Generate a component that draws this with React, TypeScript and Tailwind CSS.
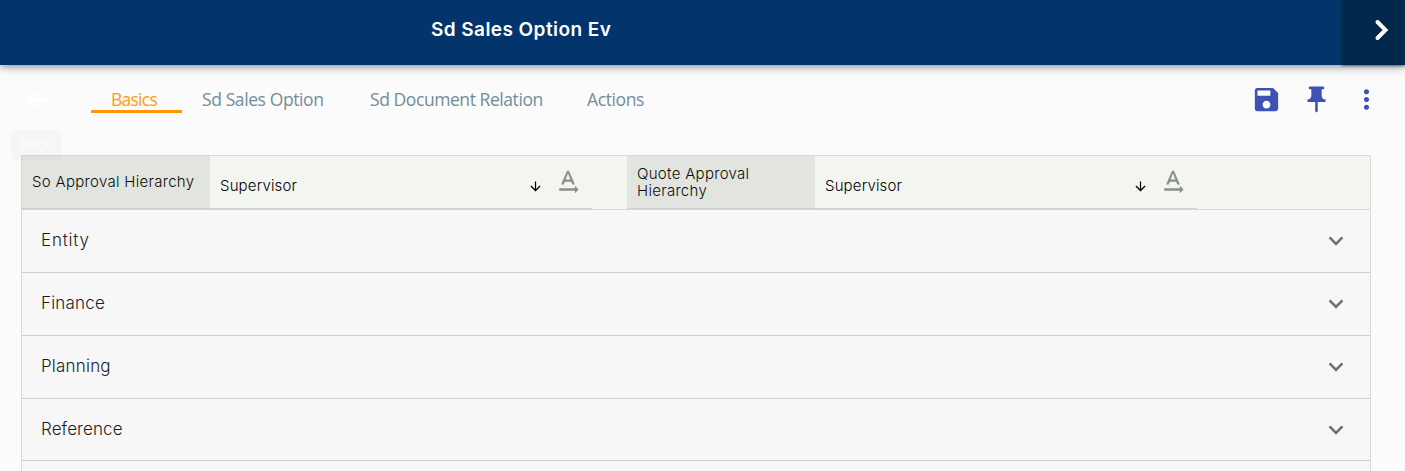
import type { ReactNode } from 'react';
import {
  MdArrowDownward,
  MdMoreVert,
  MdPushPin,
  MdSave,
  MdTextRotationNone,
} from 'react-icons/md';

const tabs = [
  { label: 'Basics', pos: 'w-[91px] pl-5', text: 'tracking-[-0.75px]', active: true },
  { label: 'Sd Sales Option', pos: 'ml-5 w-[122px]', text: 'tracking-[-0.4px]' },
  { label: 'Sd Document Relation', pos: 'ml-[46px] w-[173px]', text: 'tracking-[-0.43px]' },
  { label: 'Actions', pos: 'ml-[44px] w-[57px]', text: 'tracking-[-0.4px]' },
];

const sections = [
  { label: 'Entity', row: 'h-[63px]', text: 'tracking-[0.8px]' },
  { label: 'Finance', row: 'h-[63px]', text: 'tracking-[0.2px]' },
  { label: 'Planning', row: 'h-[63px]', text: 'tracking-[0.2px]' },
  { label: 'Reference', row: 'h-[62px]', text: 'tracking-[0.1px]' },
];

function Field({ label, value }: { label: ReactNode; value: string }) {
  return (
    <div className="flex h-full">
      <div className="flex w-[188px] items-center border-b border-[#cdd1cc] bg-[#e1e4df] pl-[10px] text-[15px] font-light leading-[17px] tracking-[0.3px] text-[#0c0e0c]">
        <span className="-mt-px">{label}</span>
      </div>
      <div className="flex w-[382px] border-b border-[#cdd2ce] pl-[10px]">
        <span className="mt-[21px] w-[308px] text-[15px] font-light leading-[18px] tracking-[0.15px] text-black">{value}</span>
        <MdArrowDownward className="mt-[23px] size-[15px] shrink-0 text-black" />
        <MdTextRotationNone className="ml-[10px] mt-[11px] size-[30px] shrink-0 text-[#8b8e89]" />
      </div>
    </div>
  );
}

export default function App() {
  return (
    <div className="flex h-[471px] w-[1405px] flex-col overflow-hidden bg-[#fbfbfb] font-['Inter',sans-serif]">
      <header className="relative flex h-[65px] shrink-0 bg-[#03346b] shadow-[0_1px_9px_rgba(0,0,0,0.5)]">
        <h1 className="w-[1342px] pl-[431px] pt-[16px] text-[19px] font-semibold leading-[28px] tracking-[0.43px] text-white">
          Sd Sales Option Ev
        </h1>
        <button className="h-full w-[63px] bg-[#02284d] pl-[31px] shadow-[0_0_3px_#02284d]" aria-label="Next">
          <svg className="mb-[5px] h-[24px] w-[18px]" viewBox="0 0 18 24" fill="none" stroke="#fff" strokeWidth="4" strokeLinecap="round" strokeLinejoin="miter">
            <path d="M4.5 4L12.5 12L4.5 20" />
          </svg>
        </button>
      </header>

      <nav className="relative flex h-[90px] shrink-0">
        <button className="ml-[21px] mt-5 size-[30px] text-white" aria-label="Back">
          <svg className="size-[30px]" viewBox="0 0 30 30" fill="none" stroke="currentColor" strokeWidth="3.5">
            <path d="M25.5 15H7.5M16 6.5L7.5 15L16 23.5" />
          </svg>
        </button>
        <div className="ml-10 mt-[22px] flex w-[1141px] font-['Open_Sans',sans-serif] text-[17.5px] leading-[25px]">
          {tabs.map((t) => (
            <div
              key={t.label}
              className={`${t.pos} ${t.text} h-[26px] shrink-0 whitespace-nowrap ${
                t.active ? 'border-b-[3px] border-[#ff9800] text-[#ff9c0c]' : 'text-[#728d99]'
              }`}
            >
              {t.label}
            </div>
          ))}
        </div>
        <div className="ml-[19px] mt-[19px] flex gap-[19px] text-[#3f51b5]">
          <MdSave className="size-[31px]" />
          <MdPushPin className="size-[31px]" />
          <MdMoreVert className="size-[31px]" />
        </div>
        <span className="absolute left-[11px] top-[65px] z-10 h-[30px] w-[50px] rounded bg-[#808080]/[0.04] pl-[10px] text-[13px] font-medium leading-[29px] text-white/60">
          Back
        </span>
      </nav>

      <main className="ml-[21px] w-[1350px] grow border-x border-t border-[#d6d9d6] bg-[#f7f7f7]">
        <div className="flex h-[54px] gap-[35px] border-b border-[#d5d8d5] bg-[#f3f5f0]">
          <Field label="So Approval Hierarchy" value="Supervisor" />
          <Field label={<>Quote Approval<br />Hierarchy</>} value="Supervisor" />
        </div>
        {sections.map((s) => (
          <div key={s.label} className={`${s.row} flex items-center justify-between border-b border-[#cecece] pl-[19px] pr-[26px] text-[17px] font-light text-[#1c1e1e]`}>
            <span className={s.text}>{s.label}</span>
            <svg className="h-[10px] w-[16px] text-[#707070]" viewBox="0 0 16 10" fill="none" stroke="currentColor" strokeWidth="2.6">
              <path d="M1.6 1.4L8 7.8L14.4 1.4" />
            </svg>
          </div>
        ))}
      </main>
    </div>
  );
}
